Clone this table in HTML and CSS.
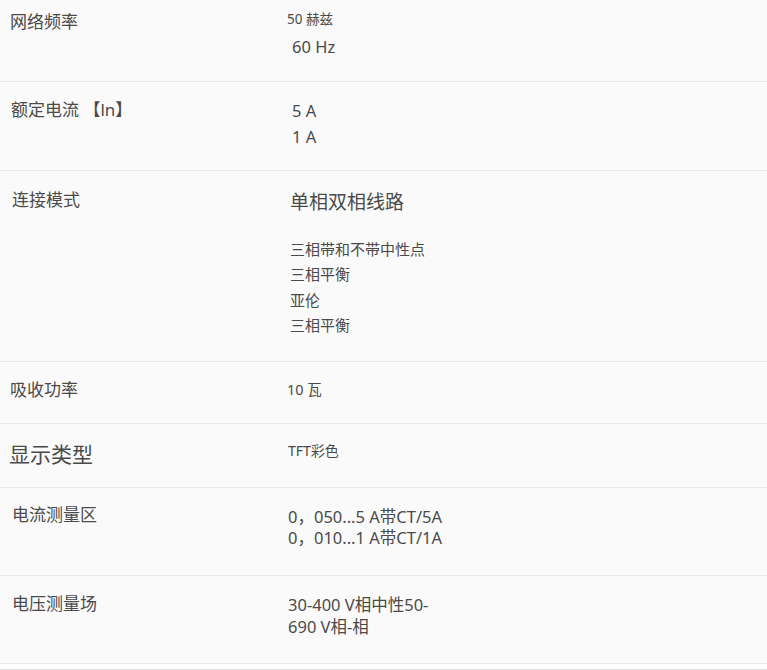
FILE: index.html
```html
<!DOCTYPE html>
<html lang="zh-CN">
<head>
<meta charset="utf-8">
<title>技术参数</title>
<link rel="stylesheet" href="styles.css">
</head>
<body>
<div class="specs">
  <div class="row r1">
    <div class="label">网络频率</div>
    <div class="value">
      <div class="v-small">50 赫兹</div>
      <div class="v-hz">60 Hz</div>
    </div>
  </div>
  <div class="row r2">
    <div class="label">额定电流 【ln】</div>
    <div class="value v-amp">
      <div>5 A</div>
      <div>1 A</div>
    </div>
  </div>
  <div class="row r3">
    <div class="label">连接模式</div>
    <div class="value">
      <div class="v-head">单相双相线路</div>
      <ul class="v-list">
        <li>三相带和不带中性点</li>
        <li>三相平衡</li>
        <li>亚伦</li>
        <li>三相平衡</li>
      </ul>
    </div>
  </div>
  <div class="row r4">
    <div class="label">吸收功率</div>
    <div class="value v-small2">10 瓦</div>
  </div>
  <div class="row r5">
    <div class="label label-big">显示类型</div>
    <div class="value v-small2">TFT彩色</div>
  </div>
  <div class="row r6">
    <div class="label">电流测量区</div>
    <div class="value v-range">
      <div>0，050...5 A带CT/5A</div>
      <div>0，010...1 A带CT/1A</div>
    </div>
  </div>
  <div class="row r7">
    <div class="label">电压测量场</div>
    <div class="value v-range2">
      <div>30-400 V相中性50-</div>
      <div>690 V相-相</div>
    </div>
  </div>
  <div class="foot"></div>
</div>
</body>
</html>
```
FILE: styles.css
```css
html, body {
  margin: 0;
  padding: 0;
  background: #fafafa;
}
body {
  font-family: "Noto Sans", "Noto Sans CJK SC", sans-serif;
  color: #4a4a4a;
}
.specs {
  width: 767px;
}
.row {
  display: grid;
  grid-template-columns: 278px 1fr;
  border-bottom: 1px solid #e9e9e9;
  box-sizing: border-box;
}
.label {
  padding-left: 10px;
  font-size: 17px;
  line-height: 24px;
}
.value {
  padding-left: 10px;
}
.r1 { height: 82px; padding-top: 10px; }
.r1 .value { padding-left: 9px; }
.r1 .v-small {
  font-size: 13.5px;
  line-height: 20px;
  margin-top: -1px;
}
.r1 .v-hz {
  font-size: 16.5px;
  line-height: 24px;
  margin-top: 6px;
  padding-left: 5px;
}
.r2 { height: 89px; padding-top: 16px; }
.r2 .label { padding-left: 11px; }
.v-amp {
  font-size: 16.5px;
  line-height: 26px;
  padding-left: 14px;
}
.r3 { height: 191px; padding-top: 17px; }
.r3 .label { padding-left: 12px; }
.r3 .value { padding-left: 12px; }
.v-head {
  font-size: 19px;
  line-height: 28px;
}
.v-list {
  list-style: none;
  margin: 21px 0 0;
  padding: 0;
  font-size: 15px;
  line-height: 25.3px;
}
.r4 { height: 62px; padding-top: 16px; }
.v-small2 {
  font-size: 14.5px;
  line-height: 24px;
  padding-left: 9px;
}
.r4 .v-small2 { margin-top: -1px; }
.r5 { height: 64px; padding-top: 15px; }
.label-big {
  font-size: 21px;
  line-height: 30px;
  padding-left: 9px;
}
.r5 .v-small2 { margin-top: 0; padding-left: 10px; font-size: 14px; }
.r6 { height: 88px; padding-top: 15px; }
.r6 .label { padding-left: 12px; }
.v-range {
  font-size: 16.5px;
  line-height: 21px;
  padding-left: 10px;
  margin-top: 3px;
}
.r7 { height: 88px; padding-top: 16px; }
.r7 .label { padding-left: 12px; }
.v-range2 {
  font-size: 16.5px;
  line-height: 22px;
  padding-left: 10px;
  margin-top: 2px;
}
.foot {
  height: 5px;
  background: #ffffff;
  border-bottom: 2px solid #dcdcdc;
}
```
